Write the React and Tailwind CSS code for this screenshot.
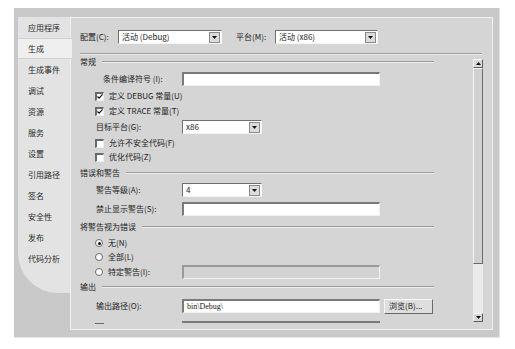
import React from "react";

const tabs = ["应用程序", "生成", "生成事件", "调试", "资源", "服务", "设置", "引用路径", "签名", "安全性", "发布", "代码分析"];

const font = { fontFamily: '"Noto Sans CJK SC", "Liberation Sans", sans-serif' };

const Combo = ({ text, w }) => (
  <div className={`${w} h-[14px] bg-white flex items-center border-t border-l border-[#6f6f6f] border-r border-b border-r-[#f4f4f4] border-b-[#f4f4f4]`}>
    <span className="flex-1 pl-[3px] text-[8px] text-[#222] leading-[12px] whitespace-nowrap">{text}</span>
    <div className="w-[11px] h-[11px] mr-[1px] bg-[#dcdcdc] border border-[#8a8a8a] flex items-center justify-center">
      <svg width="5" height="3" viewBox="0 0 5 3">
        <path d="M0 0H5L2.5 3Z" fill="#111" />
      </svg>
    </div>
  </div>
);

const TextBox = ({ text, disabled }) => (
  <div
    className={`w-[198px] h-[14px] flex items-center pl-[3px] text-[8px] leading-[12px] text-[#222] border-t-2 border-l-2 border-[#7a7a7a] border-r border-b border-r-[#f2f2f2] border-b-[#f2f2f2] ${
      disabled ? "bg-[#d3d3d3] border-t-[#9a9a9a] border-l-[#9a9a9a]" : "bg-white"
    }`}
    style={{ fontFamily: '"Liberation Serif", serif' }}
  >
    {text}
  </div>
);

const Check = ({ checked, label }) => (
  <div className="flex items-center gap-[5px] pl-[15px]">
    <div className="w-[9px] h-[9px] bg-white border-t-2 border-l-2 border-[#6a6a6a] border-r border-b border-r-[#eee] border-b-[#eee] flex items-center justify-center">
      {checked && (
        <svg width="7" height="7" viewBox="0 0 7 7">
          <path d="M0.5 3.5L2.5 5.5L6.5 1" stroke="#111" strokeWidth="1.4" fill="none" />
        </svg>
      )}
    </div>
    <span className="text-[8px] leading-[12px] text-[#222] whitespace-nowrap">{label}</span>
  </div>
);

const Radio = ({ checked, label }) => (
  <div className="flex items-center gap-[5px] pl-[15px]">
    <div className="w-[8px] h-[8px] rounded-full bg-white border border-[#6a6a6a] flex items-center justify-center">
      {checked && <div className="w-[3px] h-[3px] rounded-full bg-[#111]" />}
    </div>
    <span className="text-[8px] leading-[12px] text-[#222] whitespace-nowrap">{label}</span>
  </div>
);

const Section = ({ title }) => (
  <div className="flex items-center w-[354px]">
    <span className="text-[8px] leading-[12px] text-[#1a1a1a] pr-[6px] whitespace-nowrap">{title}</span>
    <div className="flex-1 h-[2px] border-t border-[#9a9a9a] border-b border-b-[#efefef]" />
  </div>
);

const Field = ({ label, indent, children }) => (
  <div className="flex items-center">
    <span className={`${indent} w-[102px] text-[8px] leading-[12px] text-[#222] whitespace-nowrap`}>{label}</span>
    {children}
  </div>
);

const Arrow = ({ up }) => (
  <div className="w-[10px] h-[9px] bg-[#d8d8d8] border border-t-[#f6f6f6] border-l-[#f6f6f6] border-r-[#5e5e5e] border-b-[#5e5e5e] flex items-center justify-center">
    <svg width="5" height="3" viewBox="0 0 5 3">
      <path d={up ? "M0 3H5L2.5 0Z" : "M0 0H5L2.5 3Z"} fill="#111" />
    </svg>
  </div>
);

export default function App() {
  return (
    <div className="w-[515px] h-[349px] bg-white pl-[14px] pt-[8px]" style={font}>
      <div className="w-[486px] h-[330px] bg-[#c9c9c9] border-r border-b border-[#e4e4e4] pl-[4px] pt-[9px] flex">
        {/* tabs */}
        <div className="w-[52px] h-[276px] bg-[#e3e3e3] rounded-bl-[40px] flex flex-col">
          {tabs.map((t, i) => (
            <div
              key={t}
              className={`h-[21px] flex items-center pl-[10px] text-[8px] leading-[12px] text-[#2a2a2a] whitespace-nowrap ${
                i === 1 ? "bg-[#efefef] w-[54px] relative z-10 border-t border-b border-[#d0d0d0]" : ""
              }`}
            >
              {t}
            </div>
          ))}
        </div>

        {/* content */}
        <div className="w-[423px] h-[313px] bg-[#d5d5d5] border border-[#f1f1f1] flex flex-col pl-[9px] overflow-hidden">
          <div className="mt-[12px] h-[14px] flex items-center">
            <span className="text-[8px] leading-[12px] text-[#222] w-[38px] whitespace-nowrap">配置(C):</span>
            <Combo text="活动 (Debug)" w="w-[104px]" />
            <span className="text-[8px] leading-[12px] text-[#222] ml-[14px] w-[39px] whitespace-nowrap">平台(M):</span>
            <Combo text="活动 (x86)" w="w-[103px]" />
          </div>
          <div className="mt-[9px] w-[402px] h-[2px] border-t border-[#9c9c9c] border-b border-b-[#efefef]" />

          <div className="flex h-[269px]">
            <div className="w-[393px] h-[269px] overflow-hidden flex flex-col">
              <div className="h-[14px] shrink-0 flex items-center"><Section title="常规" /></div>
              <div className="h-[20px] shrink-0 flex items-center">
                <Field label="条件编译符号 (I):" indent="pl-[23px]">
                  <TextBox text="" />
                </Field>
              </div>
              <div className="h-[14px] shrink-0 flex items-center"><Check checked label="定义 DEBUG 常量(U)" /></div>
              <div className="h-[16px] shrink-0 flex items-center"><Check checked label="定义 TRACE 常量(T)" /></div>
              <div className="h-[16px] shrink-0 flex items-center">
                <Field label="目标平台(G):" indent="pl-[16px]">
                  <Combo text="x86" w="w-[80px]" />
                </Field>
              </div>
              <div className="h-[16px] shrink-0 flex items-center"><Check label="允许不安全代码(F)" /></div>
              <div className="h-[12px] shrink-0 flex items-center"><Check label="优化代码(Z)" /></div>
              <div className="h-[20px] shrink-0 flex items-center"><Section title="错误和警告" /></div>
              <div className="h-[14px] shrink-0 flex items-center">
                <Field label="警告等级(A):" indent="pl-[16px]">
                  <Combo text="4" w="w-[80px]" />
                </Field>
              </div>
              <div className="h-[24px] shrink-0 flex items-center">
                <Field label="禁止显示警告(S):" indent="pl-[16px]">
                  <TextBox text="" />
                </Field>
              </div>
              <div className="h-[12px] shrink-0 flex items-center"><Section title="将警告视为错误" /></div>
              <div className="h-[20px] shrink-0 flex items-center"><Radio checked label="无(N)" /></div>
              <div className="h-[8px] shrink-0 flex items-center"><Radio label="全部(L)" /></div>
              <div className="h-[22px] shrink-0 flex items-center">
                <div className="w-[102px]"><Radio label="特定警告(I):" /></div>
                <TextBox text="" disabled />
              </div>
              <div className="h-[8px] shrink-0 flex items-center"><Section title="输出" /></div>
              <div className="h-[30px] shrink-0 flex items-center">
                <Field label="输出路径(O):" indent="pl-[16px]">
                  <TextBox text="bin\Debug\" />
                </Field>
                <button className="ml-[4px] w-[49px] h-[15px] bg-[#dedede] border border-t-[#f7f7f7] border-l-[#f7f7f7] border-r-[#6a6a6a] border-b-[#6a6a6a] text-[8px] leading-[12px] text-[#222] text-left pl-[4px] whitespace-nowrap">
                  浏览(B)...
                </button>
              </div>
              <div className="h-[14px] shrink-0 flex items-start">
                <div className="w-[102px] pl-[15px] pt-[2px]">
                  <div className="w-[9px] h-[9px] border-t-2 border-[#6a6a6a]" />
                </div>
                <div className="w-[198px] h-[10px] border-t-2 border-[#7a7a7a]" />
              </div>
            </div>

            {/* scrollbar */}
            <div className="w-[10px] mt-[4px] h-[263px] flex flex-col">
              <Arrow up />
              <div className="h-[196px] bg-[#d0d0d0] border border-t-[#f4f4f4] border-l-[#f4f4f4] border-r-[#6a6a6a] border-b-[#6a6a6a]" />
              <div className="flex-1 bg-[#ebebeb]" />
              <Arrow />
            </div>
          </div>
        </div>
      </div>
    </div>
  );
}
